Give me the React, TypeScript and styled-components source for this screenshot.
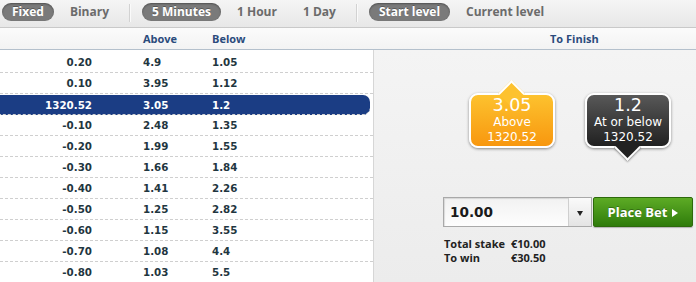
import React from 'react';
import styled, { createGlobalStyle, css } from 'styled-components';

const GlobalStyle = createGlobalStyle`
  html, body {
    margin: 0;
    padding: 0;
    background: #fff;
    overflow: hidden;
  }
`;

const Page = styled.div`
  width: 696px;
  height: 282px;
  display: flex;
  flex-direction: column;
  font-family: 'Open Sans', 'DejaVu Sans', sans-serif;
  overflow: hidden;
`;

const TopBar = styled.div`
  height: 28px;
  box-sizing: border-box;
  border-bottom: 1px solid #c9c9c9;
  background: linear-gradient(to bottom, #f5f5f5, #e7e7e7);
  display: flex;
  align-items: flex-start;
  padding: 3px 0 0 2px;
`;

const Tab = styled.div<{ $active?: boolean }>`
  height: 18px;
  line-height: 18px;
  padding: 0 10px;
  margin-right: 6px;
  border-radius: 9px;
  font-size: 12px;
  font-weight: 700;
  color: #6b6b6b;
  white-space: nowrap;
  ${(p) =>
    p.$active &&
    css`
      background: #7a7a7a;
      color: #fff;
      box-shadow: inset 0 1px 2px rgba(0, 0, 0, 0.35);
      text-shadow: 0 -1px 0 rgba(0, 0, 0, 0.3);
    `}
`;

const Divider = styled.div`
  width: 1px;
  height: 18px;
  margin: 1px 12px 0 4px;
  background: #d2d2d2;
  box-shadow: 1px 0 0 #fafafa;
`;

const HeaderRow = styled.div`
  height: 21px;
  border-bottom: 1px solid #b4c0cc;
  background: linear-gradient(to bottom, #fbfbfb, #f3f3f3);
  display: flex;
  align-items: center;
  font-size: 11px;
  font-weight: 700;
  color: #2b4b7c;
`;

const HeadCell = styled.div<{ $w: number; $pad?: number }>`
  width: ${(p) => p.$w}px;
  padding-left: ${(p) => p.$pad || 0}px;
  box-sizing: border-box;
`;

const Body = styled.div`
  flex: 1;
  display: flex;
  min-height: 0;
`;

const Ladder = styled.div`
  width: 373px;
  padding-top: 2px;
  background: #fff;
  font-family: 'DejaVu Sans', Verdana, sans-serif;
  font-size: 10.3px;
  font-weight: 700;
  color: #1f3640;
`;

const Row = styled.div<{ $current?: boolean }>`
  height: 20px;
  display: flex;
  align-items: center;
  border-bottom: 1px dashed #cfcfcf;
  ${(p) =>
    p.$current &&
    css`
      background: #1b3d84;
      color: #fff;
      border-radius: 0 7px 7px 0;
      margin-right: 3px;
      height: 19px;
      margin-top: 1px;
    `}
`;

const Level = styled.div`
  width: 92px;
  text-align: right;
`;

const Price = styled.div<{ $w: number; $pad?: number }>`
  width: ${(p) => p.$w}px;
  padding-left: ${(p) => p.$pad || 0}px;
  box-sizing: border-box;
`;

const Panel = styled.div`
  flex: 1;
  border-left: 1px solid #d6d6d6;
  background: linear-gradient(to bottom, #f4f4f4, #ececec);
  display: flex;
  flex-direction: column;
`;

const BubbleRow = styled.div`
  height: 147px;
  box-sizing: border-box;
  padding: 43px 0 0 95px;
  display: flex;
  align-items: flex-start;
  gap: 30px;
`;

const Bubble = styled.div<{ $tone: 'orange' | 'dark' }>`
  position: relative;
  width: 86px;
  box-sizing: border-box;
  border: 2px solid #fff;
  border-radius: 9px;
  padding-bottom: 2px;
  text-align: center;
  color: #fff;
  font-family: 'DejaVu Sans', Verdana, sans-serif;
  box-shadow: 0 1px 3px rgba(0, 0, 0, 0.45);
  background: ${(p) =>
    p.$tone === 'orange'
      ? 'linear-gradient(to bottom, #fdc22e, #f8970f)'
      : 'linear-gradient(to bottom, #585858, #212121)'};

  &::after {
    content: '';
    position: absolute;
    left: 50%;
    width: 17px;
    height: 17px;
    margin-left: -10px;
    transform: rotate(45deg);
    ${(p) =>
      p.$tone === 'orange'
        ? css`
            top: -11px;
            background: #fdc22e;
            border-top: 2px solid #fff;
            border-left: 2px solid #fff;
          `
        : css`
            bottom: -11px;
            background: #222;
            border-bottom: 2px solid #fff;
            border-right: 2px solid #fff;
            box-shadow: 1px 1px 2px rgba(0, 0, 0, 0.3);
          `}
  }
`;

const BubbleOdds = styled.div`
  position: relative;
  z-index: 1;
  font-size: 17.5px;
  line-height: 20px;
`;

const BubbleLine = styled.div`
  position: relative;
  z-index: 1;
  font-size: 12px;
  line-height: 14.5px;
`;

const BetArea = styled.div`
  padding-left: 69px;
`;

const BetForm = styled.div`
  display: flex;
  height: 30px;
`;

const StakeBox = styled.div`
  width: 149px;
  display: flex;
  border: 1px solid #a9a9a9;
  box-sizing: border-box;
  background: linear-gradient(to bottom, #fafafa, #e4e4e4);
`;

const StakeField = styled.div`
  flex: 1;
  border-right: 1px solid #cfcfcf;
  padding-left: 6px;
  font-family: 'DejaVu Sans', Verdana, sans-serif;
  font-weight: 700;
  font-size: 13.6px;
  line-height: 28px;
  color: #1a1a1a;
  background: linear-gradient(to bottom, #f2f2f2, #fdfdfd);
  box-shadow: inset 1px 1px 1px rgba(0, 0, 0, 0.12);
`;

const DropToggle = styled.div`
  width: 22px;
  display: flex;
  align-items: center;
  justify-content: center;
  padding-top: 3px;
  box-sizing: border-box;

  &::before {
    content: '';
    border-left: 3.5px solid transparent;
    border-right: 3.5px solid transparent;
    border-top: 5px solid #222;
  }
`;

const PlaceBet = styled.div`
  width: 100px;
  margin-left: 1px;
  box-sizing: border-box;
  border: 1px solid #2d6a0c;
  border-radius: 2px;
  background: linear-gradient(to bottom, #5dab25, #2f7c0b);
  color: #fff;
  font-size: 13px;
  font-weight: 700;
  display: flex;
  align-items: center;
  justify-content: center;
  gap: 5px;
  text-shadow: 0 -1px 0 rgba(0, 0, 0, 0.3);
  box-shadow: 0 1px 1px rgba(0, 0, 0, 0.25);

  &::after {
    content: '';
    border-top: 4.5px solid transparent;
    border-bottom: 4.5px solid transparent;
    border-left: 6px solid #fff;
    margin-top: 1px;
  }
`;

const Totals = styled.div`
  margin-top: 10px;
  display: grid;
  grid-template-columns: 67px auto;
  font-size: 11px;
  font-weight: 700;
  line-height: 14px;
  color: #222;
  padding-left: 1px;
`;

const rows = [
  ['0.20', '4.9', '1.05'],
  ['0.10', '3.95', '1.12'],
  ['1320.52', '3.05', '1.2'],
  ['-0.10', '2.48', '1.35'],
  ['-0.20', '1.99', '1.55'],
  ['-0.30', '1.66', '1.84'],
  ['-0.40', '1.41', '2.26'],
  ['-0.50', '1.25', '2.82'],
  ['-0.60', '1.15', '3.55'],
  ['-0.70', '1.08', '4.4'],
  ['-0.80', '1.03', '5.5'],
];

export default function App() {
  return (
    <Page>
      <GlobalStyle />
      <TopBar>
        <Tab $active>Fixed</Tab>
        <Tab>Binary</Tab>
        <Divider />
        <Tab $active>5 Minutes</Tab>
        <Tab>1 Hour</Tab>
        <Tab>1 Day</Tab>
        <Divider />
        <Tab $active>Start level</Tab>
        <Tab>Current level</Tab>
      </TopBar>
      <HeaderRow>
        <HeadCell $w={143} />
        <HeadCell $w={69}>Above</HeadCell>
        <HeadCell $w={161}>Below</HeadCell>
        <HeadCell $w={323} $pad={177}>To Finish</HeadCell>
      </HeaderRow>
      <Body>
        <Ladder>
          {rows.map(([level, above, below], i) => (
            <Row key={level} $current={i === 2}>
              <Level>{level}</Level>
              <Price $w={120} $pad={51}>{above}</Price>
              <Price $w={60}>{below}</Price>
            </Row>
          ))}
        </Ladder>
        <Panel>
          <BubbleRow>
            <Bubble $tone="orange">
              <BubbleOdds>3.05</BubbleOdds>
              <BubbleLine>Above</BubbleLine>
              <BubbleLine>1320.52</BubbleLine>
            </Bubble>
            <Bubble $tone="dark">
              <BubbleOdds>1.2</BubbleOdds>
              <BubbleLine>At or below</BubbleLine>
              <BubbleLine>1320.52</BubbleLine>
            </Bubble>
          </BubbleRow>
          <BetArea>
            <BetForm>
              <StakeBox>
                <StakeField>10.00</StakeField>
                <DropToggle />
              </StakeBox>
              <PlaceBet>Place Bet</PlaceBet>
            </BetForm>
            <Totals>
              <span>Total stake</span>
              <span>€10.00</span>
              <span>To win</span>
              <span>€30.50</span>
            </Totals>
          </BetArea>
        </Panel>
      </Body>
    </Page>
  );
}
